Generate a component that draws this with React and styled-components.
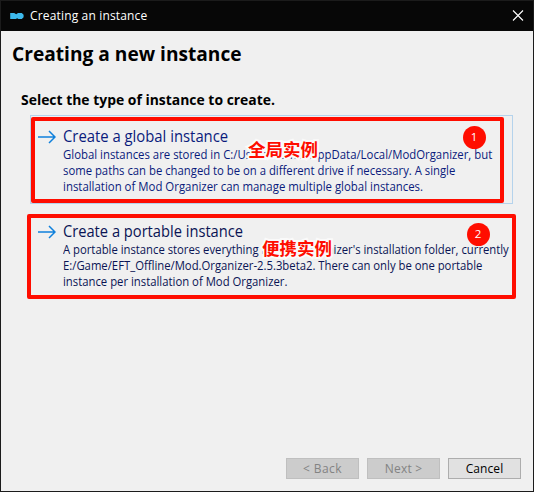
import React from 'react';
import styled, { createGlobalStyle } from 'styled-components';

const Global = createGlobalStyle`
  * { box-sizing: border-box; }
  body { margin: 0; font-family: 'Open Sans', 'Noto Sans', sans-serif; overflow: hidden; }
`;
const Window = styled.div`
  width: 534px; height: 492px; display: flex; flex-direction: column;
  border: 1px solid #1b1b1b; background: #f0f0f0; color: #000;
`;
const TitleBar = styled.header`
  height: 30px; flex: none; display: flex; align-items: center;
  padding: 0 9px; background: #070707; color: #fff;
`;
const Caption = styled.span`
  margin-left: 6px; flex: 1; font-size: 12px; line-height: 16px;
  letter-spacing: 0.16px; white-space: nowrap;
`;
const Content = styled.main`
  flex: 1; display: flex; flex-direction: column; padding: 9px 20px 0 11px;
`;
const Heading = styled.h1`
  margin: 0; font-size: 20px; line-height: 28px; font-weight: 700;
  transform: scaleX(0.957); transform-origin: left; white-space: nowrap;
`;
const Question = styled.h2`
  margin: 22px 0 0 9px; font-size: 14.5px; line-height: 20px; font-weight: 700;
  transform: scaleX(0.96); transform-origin: left; white-space: nowrap;
`;
const Options = styled.div`
  display: flex; flex-direction: column; gap: 6px; margin: 5px 0 0 18px;
`;
const Option = styled.section`
  position: relative; width: 483px; height: 89px; display: flex; gap: 7px;
  padding: 11px 0 0 7px; border: 1px solid ${p => p.$focused ? '#b5d3ec' : 'transparent'};
  color: ${p => p.$focused ? '#0a1b7c' : '#0a1454'};
`;
const OptionText = styled.div`
  display: flex; flex-direction: column; align-items: flex-start; width: 450px; white-space: nowrap;
`;
const OptionTitle = styled.div`
  font-size: 15.5px; line-height: 19px; margin-bottom: 1px;
  transform: scaleX(${p => p.$condense}); transform-origin: left;
`;
const Line = styled.div`
  font-size: 12px; line-height: 16px;
  transform: scaleX(${p => p.$condense}); transform-origin: left;
`;
const Frame = styled.div`
  position: absolute; left: ${p => p.$x}px; top: ${p => p.$y}px;
  width: ${p => p.$w}px; height: ${p => p.$h}px;
  border: 4px solid #ff0d00; border-radius: 2px;
`;
const Badge = styled.div`
  position: absolute; left: ${p => p.$x}px; top: ${p => p.$y}px;
  width: 23px; height: 23px; border-radius: 50%; background: #ff0d00; color: #fff;
  font-size: 11.5px; line-height: 22px; text-align: center;
`;
const Label = styled.div`
  position: absolute; left: ${p => p.$x}px; top: ${p => p.$y}px;
  font: 700 17.5px/24px 'Noto Sans CJK SC', sans-serif; color: #ff0d00; white-space: nowrap;
  -webkit-text-stroke: 4px #fafafa; paint-order: stroke fill;
`;
const Footer = styled.footer`
  display: flex; justify-content: flex-end; gap: 8px; padding: 0 12px 12px 0;
`;
const Button = styled.button`
  width: 73px; height: 21px; padding: 0; font: 12px/17px 'Open Sans', sans-serif;
  letter-spacing: ${p => p.$track}px;
  border: 1px solid #adadad; background: #e1e1e1; color: #000;
  &:disabled { border-color: #bfbfbf; background: #ccc; color: #838383; }
`;
const ArrowIcon = styled.svg`
  flex: none; width: 18px; height: 20px; fill: none; stroke: #0f80dc; stroke-width: 1.5;
`;

const Logo = () => (
  <svg width="14" height="8" viewBox="0 0 14 8" fill="#3db9ec">
    <path d="M.2 1h4l2 1.2L8 1h3.8l1.8 1.8v2.4L11.8 7H8.4L7.2 6.2 5.8 7H.2z" />
  </svg>
);
const Close = () => (
  <svg width="12" height="12" viewBox="0 0 12 12" fill="none" stroke="#fff" strokeWidth="1.1">
    <path d="M1 .5l10 10M11 .5L1 10.5" />
  </svg>
);
const Arrow = () => (
  <ArrowIcon viewBox="0 0 18 20">
    <path d="M0 10h17M11 4l6 6-6 6" />
  </ArrowIcon>
);

const options = [
  {
    title: 'Create a global instance', condense: 0.957, label: '全局实例',
    frame: [0, 1, 473, 86], badge: [431.5, 9.5], labelAt: [217, 21],
    lines: [
      ['Global instances are stored in C:/Users/Admin/AppData/Local/ModOrganizer, but', 0.947],
      ['some paths can be changed to be on a different drive if necessary. A single', 0.942],
      ['installation of Mod Organizer can manage multiple global instances.', 0.951],
    ],
  },
  {
    title: 'Create a portable instance', condense: 0.946, label: '便携实例',
    frame: [-4, 3, 489, 85], badge: [435.5, 11.5], labelAt: [231, 25],
    lines: [
      ["A portable instance stores everything in Mod Organizer's installation folder, currently", 0.94],
      ['E:/Game/EFT_Offline/Mod.Organizer-2.5.3beta2. There can only be one portable', 0.942],
      ['instance per installation of Mod Organizer.', 0.943],
    ],
  },
];

export default function App() {
  return (
    <Window>
      <Global />
      <TitleBar><Logo /><Caption>Creating an instance</Caption><Close /></TitleBar>
      <Content>
        <Heading>Creating a new instance</Heading>
        <Question>Select the type of instance to create.</Question>
        <Options>
          {options.map((o, i) => (
            <Option key={o.title} $focused={i === 0}>
              <Arrow />
              <OptionText>
                <OptionTitle $condense={o.condense}>{o.title}</OptionTitle>
                {o.lines.map(([text, condense]) => <Line key={text} $condense={condense}>{text}</Line>)}
              </OptionText>
              <Frame $x={o.frame[0]} $y={o.frame[1]} $w={o.frame[2]} $h={o.frame[3]} />
              <Badge $x={o.badge[0]} $y={o.badge[1]}>{i + 1}</Badge>
              <Label $x={o.labelAt[0]} $y={o.labelAt[1]}>{o.label}</Label>
            </Option>
          ))}
        </Options>
      </Content>
      <Footer>
        <Button disabled $track={0.4}>&lt; Back</Button>
        <Button disabled $track={0.2}>Next &gt;</Button>
        <Button $track={0.1}>Cancel</Button>
      </Footer>
    </Window>
  );
}
